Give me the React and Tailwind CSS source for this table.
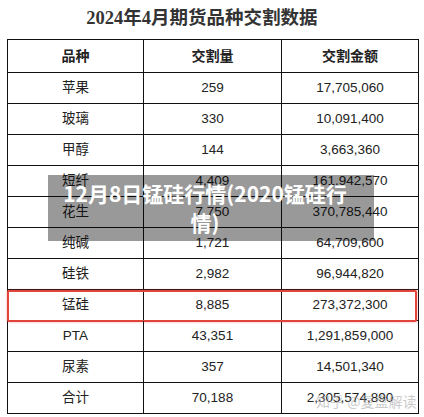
const rows = [
  ["苹果", "259", "17,705,060"],
  ["玻璃", "330", "10,091,400"],
  ["甲醇", "144", "3,663,360"],
  ["短纤", "4,409", "161,942,570"],
  ["花生", "7,750", "370,785,440"],
  ["纯碱", "1,721", "64,709,600"],
  ["硅铁", "2,982", "96,944,820"],
  ["锰硅", "8,885", "273,372,300"],
  ["PTA", "43,351", "1,291,859,000"],
  ["尿素", "357", "14,501,340"],
  ["合计", "70,188", "2,305,574,890"],
];

const cell = "flex items-center justify-center border-r border-b border-[#111]";

export default function App() {
  return (
    <div className="relative w-[424px] h-[417px] bg-white overflow-hidden font-['Liberation_Sans','Noto_Sans_CJK_SC',sans-serif] text-[#222]">
      {/* title */}
      <div className="h-[39px] flex items-center justify-center pr-[20px] pb-[1px]">
        <h1 className="text-[18.5px] font-bold text-[#333] font-['Liberation_Serif','Noto_Sans_CJK_SC',serif]">
          2024年4月期货品种交割数据
        </h1>
      </div>

      {/* table */}
      <div className="ml-[7px] w-[412px] border-l border-t border-[#111] grid grid-cols-[136px_138px_137px]">
        <div className={`${cell} h-[33px] font-bold text-[14px]`}>品种</div>
        <div className={`${cell} h-[33px] font-bold text-[14px]`}>交割量</div>
        <div className={`${cell} h-[33px] font-bold text-[14px]`}>交割金额</div>
        {rows.map((r, i) => (
          <div key={i} className="contents">
            <div className={`${cell} h-[31px] text-[13.5px] relative`}>
              {r[0]}
              {r[0] === "锰硅" && (
                <div className="absolute left-[-1px] top-0 w-[410px] h-[32px] border-2 border-[#e2443c] rounded-[2px] shadow-[0_0_2px_rgba(226,68,60,0.6)] pointer-events-none" />
              )}
            </div>
            <div className={`${cell} h-[31px] text-[13.5px]`}>{r[1]}</div>
            <div className={`${cell} h-[31px] text-[13.5px]`}>{r[2]}</div>
          </div>
        ))}
      </div>

      {/* caption overlay */}
      <div className="absolute left-[48px] top-[175px] w-[326px] h-[66px] bg-black/40 flex items-center justify-center pr-[12px]">
        <p className="w-[296px] text-center text-white font-bold text-[21px] leading-[29px] font-['Noto_Sans_CJK_SC',sans-serif]">
          12月8日锰硅行情(2020锰硅行情)
        </p>
      </div>

      {/* watermark */}
      <div className="absolute left-[316px] top-[391px] text-[14px] text-[#a8a8a8]/60 font-['Noto_Sans_CJK_SC',sans-serif] whitespace-nowrap">
        知乎 @复盘解读
      </div>
    </div>
  );
}
